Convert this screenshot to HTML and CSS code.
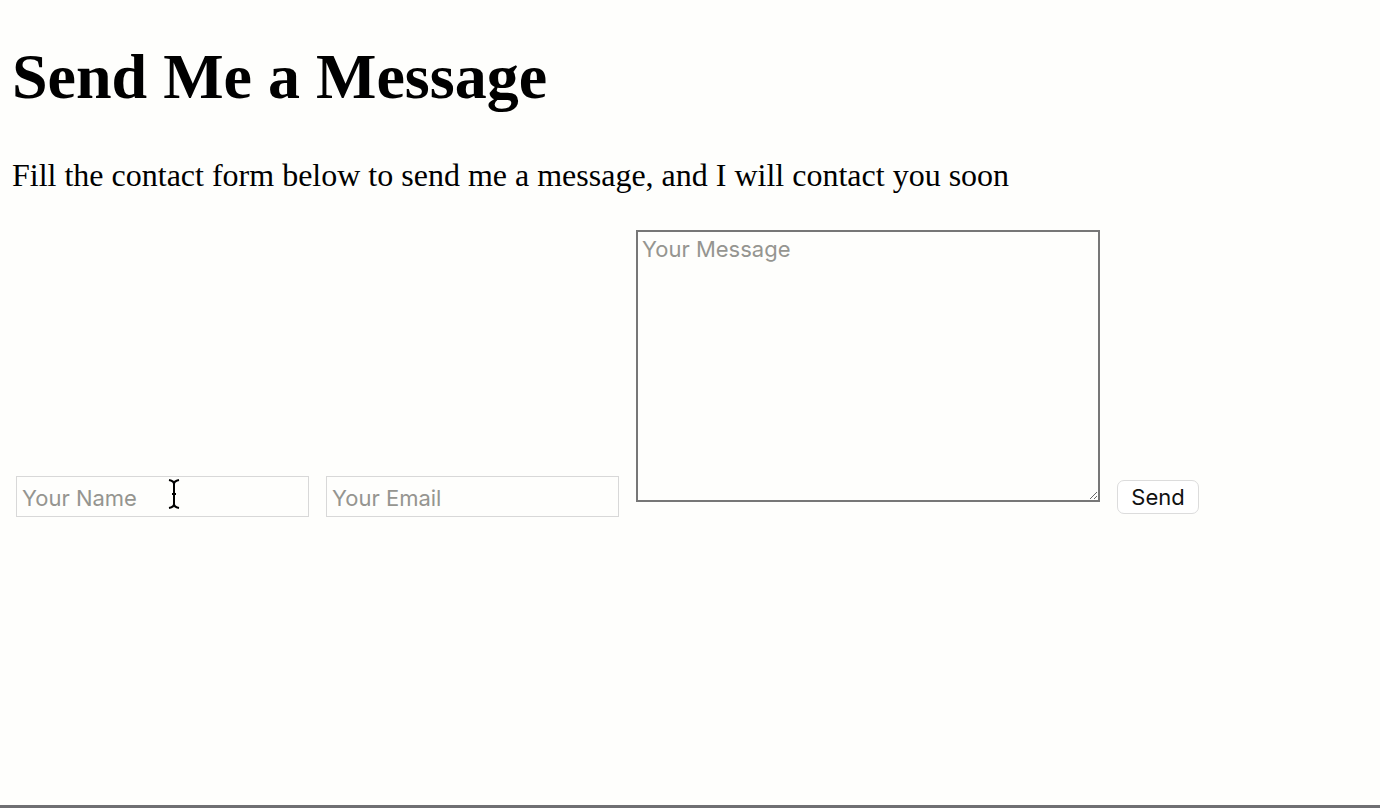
FILE: index.html
```html
<!DOCTYPE html>
<html lang="en">
<head>
<meta charset="utf-8">
<title>Send Me a Message</title>
<link rel="stylesheet" href="styles.css">
</head>
<body>
<div class="page">
  <h1 class="title">Send Me a Message</h1>
  <p class="lead">Fill the contact form below to send me a message, and I will contact you soon</p>
  <form class="contact-form">
    <div class="field-wrap">
      <input class="field" type="text" placeholder="Your Name">
      <svg class="ibeam" width="14" height="32" viewBox="0 0 14 32" aria-hidden="true">
        <path d="M2 2 Q7 3 7 6 L7 26 Q7 29 2 30 M12 2 Q7 3 7 6 M7 26 Q7 29 12 30 M5 16 H9" fill="none" stroke="#000" stroke-width="2"/>
      </svg>
    </div>
    <input class="field" type="email" placeholder="Your Email">
    <textarea class="message" placeholder="Your Message"></textarea>
    <button class="send" type="button">Send</button>
  </form>
</div>
</body>
</html>
```

FILE: styles.css
```css
html, body {
  margin: 0;
  padding: 0;
  background: #fefefc;
}

.page {
  box-sizing: border-box;
  min-height: 808px;
  padding: 0 0 0 12px;
  border-bottom: 3px solid #6f6f72;
  font-family: "Liberation Serif", "Times New Roman", serif;
  color: #000;
}

.title {
  margin: 0;
  padding-top: 40px;
  font-size: 64px;
  line-height: 74px;
  font-weight: bold;
}

.lead {
  margin: 43px 0 0 0;
  font-size: 32px;
  line-height: 36px;
}

.contact-form {
  display: flex;
  align-items: flex-end;
  gap: 17px;
  margin-top: 37px;
  padding-left: 4px;
}

.field-wrap {
  position: relative;
  display: flex;
}

.field {
  box-sizing: border-box;
  width: 293px;
  height: 41px;
  margin: 0 0 -15px 0;
  padding: 2px 5px 0;
  border: 1px solid #d8d8d8;
  background: #fefefc;
  font-family: "Inter", "Liberation Sans", sans-serif;
  font-size: 22px;
  color: #222;
  outline: none;
}

.field::placeholder,
.message::placeholder {
  color: #959590;
}

.ibeam {
  position: absolute;
  left: 151px;
  top: 2px;
}

.message {
  box-sizing: border-box;
  width: 464px;
  height: 272px;
  margin: 0;
  padding: 4px 4px;
  border: 2px solid #777;
  background: #fefefc;
  font-family: "Inter", "Liberation Sans", sans-serif;
  font-size: 22px;
  color: #222;
  outline: none;
}

.send {
  box-sizing: border-box;
  width: 82px;
  height: 34px;
  margin: 0 0 -12px 0;
  padding: 0;
  border: 1px solid #dcdcdc;
  border-radius: 7px;
  background: #fff;
  font-family: "Inter", "Liberation Sans", sans-serif;
  font-size: 22px;
  color: #111;
}
```
